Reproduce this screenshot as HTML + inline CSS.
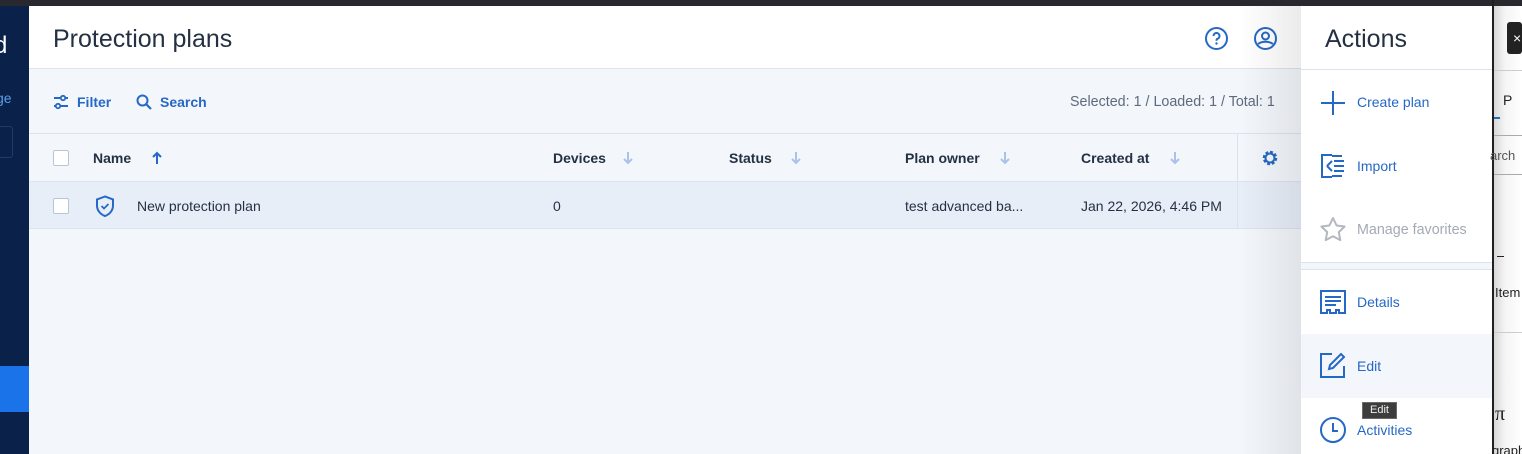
<!DOCTYPE html>
<html><head><style>
*{box-sizing:border-box;margin:0;padding:0}
html,body{width:1522px;height:454px;overflow:hidden}
body{position:relative;font-family:"Liberation Sans",sans-serif;background:#f3f6fb}
.a{position:absolute}
.blue{color:#2668c5}
.t{font-size:14px;color:#243143;position:absolute}
.h{font-size:14px;font-weight:bold;color:#243143;position:absolute}
.arr{position:absolute}
.cb{position:absolute;width:16px;height:16px;border:1px solid #b9c6d8;background:#fff;border-radius:2px}
.act{position:absolute;left:1357px;font-size:14px;color:#2668c5}
</style></head><body>
<div class="a" style="left:0;top:0;width:1522px;height:6px;background:#29282e"></div>
<div class="a" style="left:0;top:6px;width:29px;height:448px;background:#0a2149"></div>
<div class="a" style="left:-6px;top:32px;color:#fff;font-size:24px;font-weight:300">d</div>
<div class="a" style="left:-4px;top:90px;color:#5b9ee8;font-size:14px">ge</div>
<div class="a" style="left:-4px;top:126px;width:17px;height:32px;border:1px solid #1e3b6b;border-radius:3px"></div>
<div class="a" style="left:0;top:366px;width:29px;height:46px;background:#1a73e8"></div>
<div class="a" style="left:29px;top:6px;width:1272px;height:63px;background:#fff;border-bottom:1px solid #dbe3ef"></div>
<div class="a" style="left:53px;top:25px;font-size:25px;color:#243143">Protection plans</div>
<svg class="a" style="left:1204px;top:26px" width="25" height="25" viewBox="0 0 25 25"><circle cx="12.5" cy="12.5" r="10.5" fill="none" stroke="#2668c5" stroke-width="2"/><path d="M9.5 10a3 3 0 1 1 4 2.8c-1 .4-1 1-1 2" fill="none" stroke="#2668c5" stroke-width="2"/><circle cx="12.5" cy="17.5" r="1.2" fill="#2668c5"/></svg>
<svg class="a" style="left:1253px;top:26px" width="25" height="25" viewBox="0 0 25 25"><circle cx="12.5" cy="12.5" r="10.5" fill="none" stroke="#2668c5" stroke-width="2"/><circle cx="12.5" cy="10" r="3.5" fill="none" stroke="#2668c5" stroke-width="2"/><path d="M5 18c4-3 11-3 15 0" fill="none" stroke="#2668c5" stroke-width="2"/></svg>
<svg class="a" style="left:53px;top:94px" width="16" height="16" viewBox="0 0 16 16"><path d="M1 4h14M1 12h14" stroke="#2668c5" stroke-width="2"/><circle cx="10" cy="4" r="2.2" fill="#f3f6fb" stroke="#2668c5" stroke-width="1.8"/><circle cx="5" cy="12" r="2.2" fill="#f3f6fb" stroke="#2668c5" stroke-width="1.8"/></svg>
<div class="a blue" style="left:77px;top:94px;font-size:14px;font-weight:bold">Filter</div>
<svg class="a" style="left:136px;top:94px" width="16" height="16" viewBox="0 0 16 16"><circle cx="6.5" cy="6.5" r="5" fill="none" stroke="#2668c5" stroke-width="2"/><path d="M10 10l5 5" stroke="#2668c5" stroke-width="2.2"/></svg>
<div class="a blue" style="left:160px;top:94px;font-size:14px;font-weight:bold">Search</div>
<div class="a" style="left:1070px;top:94px;font-size:14.3px;color:#5e6b7d">Selected: 1 / Loaded: 1 / Total: 1</div>
<div class="a" style="left:29px;top:133px;width:1272px;height:1px;background:#dbe3ef"></div>
<div class="a" style="left:29px;top:181px;width:1272px;height:1px;background:#dbe3ef"></div>
<div class="a" style="left:29px;top:182px;width:1272px;height:47px;background:#e8eef8;border-bottom:1px solid #dbe3ef"></div>
<div class="a" style="left:1237px;top:134px;width:1px;height:95px;background:#dbe3ef"></div>
<div class="cb" style="left:53px;top:150px"></div>
<div class="cb" style="left:53px;top:198px"></div>
<div class="h" style="left:93px;top:150px">Name</div>
<svg class="arr" style="left:152px;top:151px" width="10" height="13" viewBox="0 0 10 13"><path d="M5 13V2M1 6l4-4 4 4" fill="none" stroke="#2668c5" stroke-width="2"/></svg>
<div class="h" style="left:553px;top:150px">Devices</div>
<svg class="arr" style="left:623px;top:152px" width="10" height="13" viewBox="0 0 10 13"><path d="M5 0v11M1 7l4 4 4-4" fill="none" stroke="#a9c3e8" stroke-width="2"/></svg>
<div class="h" style="left:729px;top:150px">Status</div>
<svg class="arr" style="left:791px;top:152px" width="10" height="13" viewBox="0 0 10 13"><path d="M5 0v11M1 7l4 4 4-4" fill="none" stroke="#a9c3e8" stroke-width="2"/></svg>
<div class="h" style="left:905px;top:150px">Plan owner</div>
<svg class="arr" style="left:1000px;top:152px" width="10" height="13" viewBox="0 0 10 13"><path d="M5 0v11M1 7l4 4 4-4" fill="none" stroke="#a9c3e8" stroke-width="2"/></svg>
<div class="h" style="left:1081px;top:150px">Created at</div>
<svg class="arr" style="left:1170px;top:152px" width="10" height="13" viewBox="0 0 10 13"><path d="M5 0v11M1 7l4 4 4-4" fill="none" stroke="#a9c3e8" stroke-width="2"/></svg>
<svg class="a" style="left:1261px;top:149px" width="18" height="18" viewBox="0 0 18 18"><circle cx="9" cy="9" r="5.5" fill="none" stroke="#2668c5" stroke-width="3.5" stroke-dasharray="2.6 1.7"/><circle cx="9" cy="9" r="4.5" fill="none" stroke="#2668c5" stroke-width="2"/></svg>
<svg class="a" style="left:95px;top:195px" width="20" height="23" viewBox="0 0 20 23"><path d="M10 1.5L2 4.5v6c0 5 3.5 9 8 10.5 4.5-1.5 8-5.5 8-10.5v-6z" fill="none" stroke="#2668c5" stroke-width="2"/><path d="M6.5 11l2.5 2.5 4.5-4.5" fill="none" stroke="#2668c5" stroke-width="1.8"/></svg>
<div class="t" style="left:137px;top:198px">New protection plan</div>
<div class="t" style="left:553px;top:198px">0</div>
<div class="t" style="left:905px;top:198px">test advanced ba...</div>
<div class="t" style="left:1081px;top:198px">Jan 22, 2026, 4:46 PM</div>
<div class="a" style="left:1240px;top:6px;width:61px;height:448px;background:linear-gradient(90deg,rgba(0,0,0,0),rgba(0,0,0,.08))"></div>
<div class="a" style="left:1301px;top:6px;width:191px;height:448px;background:#fff"></div>
<div class="a" style="left:1301px;top:69px;width:191px;height:1px;background:#dbe3ef"></div>
<div class="a" style="left:1325px;top:25px;font-size:25px;color:#243143">Actions</div>
<svg class="a" style="left:1320px;top:90px" width="26" height="26"><path d="M13 1v24M1 13h24" stroke="#2668c5" stroke-width="2"/></svg>
<div class="act" style="top:94px">Create plan</div>
<svg class="a" style="left:1320px;top:153px" width="26" height="26" viewBox="0 0 26 26"><path d="M12 2H2v22h10" fill="none" stroke="#2668c5" stroke-width="2"/><path d="M12 3h10M14 8h10M14 13h10M14 18h10M12 23h10M7 13l5-5M7 13l5 5" fill="none" stroke="#2668c5" stroke-width="2"/></svg>
<div class="act" style="top:158px">Import</div>
<svg class="a" style="left:1319px;top:216px" width="28" height="28" viewBox="0 0 28 28"><path d="M14 2l3.6 7.5 8 1-5.8 5.6 1.5 8L14 20.3 6.7 24.1l1.5-8L2.4 10.5l8-1z" fill="none" stroke="#b3b8c0" stroke-width="2" stroke-linejoin="round"/></svg>
<div class="act" style="top:222px;color:#a4aab3;font-size:14.3px">Manage favorites</div>
<div class="a" style="left:1301px;top:262px;width:191px;height:8px;background:#f3f6fb;border-top:1px solid #dbe3ef;border-bottom:1px solid #dbe3ef"></div>
<svg class="a" style="left:1320px;top:290px" width="26" height="24" viewBox="0 0 26 24"><path d="M1 1h24v22h-6v-3h-3v3h-6v-3H7v3H1z" fill="none" stroke="#2668c5" stroke-width="2"/><path d="M5 7h16M5 11h16M5 15h11" stroke="#2668c5" stroke-width="2"/></svg>
<div class="act" style="top:294px">Details</div>
<div class="a" style="left:1301px;top:334px;width:191px;height:64px;background:#f3f6fb"></div>
<svg class="a" style="left:1320px;top:352px" width="26" height="26" viewBox="0 0 26 26"><path d="M12 2H1v23h23V14" fill="none" stroke="#2668c5" stroke-width="2"/><path d="M9 17l1-4L21 2l3 3-11 11z" fill="none" stroke="#2668c5" stroke-width="2"/></svg>
<div class="act" style="top:358px">Edit</div>
<svg class="a" style="left:1319px;top:416px" width="28" height="28" viewBox="0 0 28 28"><circle cx="14" cy="14" r="12" fill="none" stroke="#2668c5" stroke-width="2"/><path d="M14 7v8h5" fill="none" stroke="#2668c5" stroke-width="2"/></svg>
<div class="act" style="top:422px">Activities</div>
<div class="a" style="left:1362px;top:402px;width:35px;height:17px;background:#3d3d3d;border:1px solid #6a6a6a;color:#eee;font-size:11px;text-align:center;line-height:15px">Edit</div>
<div class="a" style="left:1492px;top:0;width:2px;height:454px;background:#1f1f22"></div>
<div class="a" style="left:1494px;top:6px;width:28px;height:448px;background:linear-gradient(90deg,#d8d8d8,#f5f5f5 40%,#fff)"></div>
<div class="a" style="left:1507px;top:22px;width:15px;height:32px;background:#222;border-radius:3px;color:#fff;font-size:14px;line-height:32px;padding-left:6px">×</div>
<div class="a" style="left:1494px;top:70px;width:28px;height:1px;background:#ccc"></div>
<div class="a" style="left:1503px;top:92px;font-size:14px;color:#222">P</div>
<div class="a" style="left:1494px;top:117px;width:6px;height:2px;background:#1d6fb8"></div>
<div class="a" style="left:1494px;top:135px;width:28px;height:1px;background:#aaa"></div>
<div class="a" style="left:1490px;top:148px;font-size:13px;color:#555">arch</div>
<div class="a" style="left:1494px;top:174px;width:28px;height:1px;background:#aaa"></div>
<div class="a" style="left:1497px;top:256px;width:7px;height:1px;background:#222"></div>
<div class="a" style="left:1495px;top:285px;font-size:13px;color:#222">Item</div>
<div class="a" style="left:1494px;top:332px;width:28px;height:1px;background:#ccc"></div>
<div class="a" style="left:1495px;top:403px;font-size:20px;color:#222;font-family:'Liberation Serif',serif">π</div>
<div class="a" style="left:1492px;top:443px;font-size:13px;color:#222">graph</div>
</body></html>
